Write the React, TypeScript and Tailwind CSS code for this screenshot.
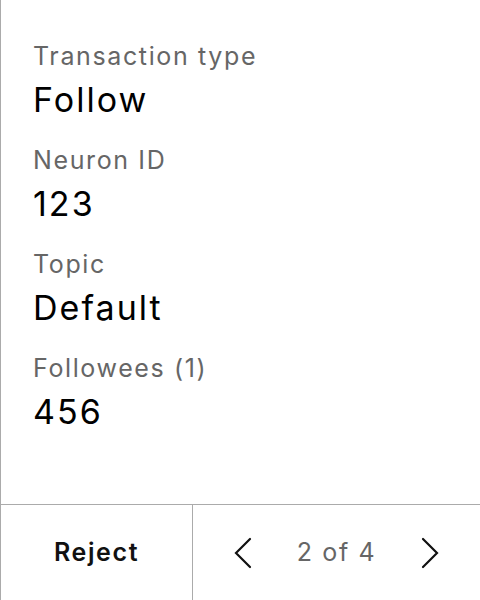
import React from 'react';

const fields = [
  { label: 'Transaction type', value: 'Follow' },
  { label: 'Neuron ID', value: '123' },
  { label: 'Topic', value: 'Default' },
  { label: 'Followees (1)', value: '456' },
];

function Chevron({ dir }: { dir: 'left' | 'right' }) {
  return (
    <svg width="24" height="32" viewBox="0 0 24 32" fill="none" stroke="#111" strokeWidth="2.2" strokeLinecap="round" strokeLinejoin="miter">
      {dir === 'left' ? <path d="M19 2 L5 16 L19 30" /> : <path d="M5 2 L19 16 L5 30" />}
    </svg>
  );
}

export default function App() {
  return (
    <div
      className="flex h-screen w-full flex-col border-l border-[#ababab] bg-white text-black"
      style={{ fontFamily: 'Inter, "Noto Sans", sans-serif' }}
    >
      {/* details */}
      <div className="flex flex-1 flex-col gap-6 px-8 pt-10">
        {fields.map((f) => (
          <div key={f.label} className="flex flex-col gap-2">
            <div className="text-[25px] leading-[32px] tracking-[0.065em] text-[#666666]">{f.label}</div>
            <div className="text-[34px] leading-[40px] tracking-[0.06em] text-black">{f.value}</div>
          </div>
        ))}
      </div>

      {/* footer actions */}
      <div className="flex h-[96px] border-t border-[#ababab]">
        <button
          type="button"
          className="flex w-[192px] items-center justify-center border-r border-[#ababab] text-[25px] font-semibold tracking-[0.065em] text-[#111]"
        >
          Reject
        </button>
        <div className="flex flex-1 items-center justify-between px-[38px]">
          <button type="button" className="flex items-center">
            <Chevron dir="left" />
          </button>
          <span className="text-[25px] tracking-[0.065em] text-[#666666]">2 of 4</span>
          <button type="button" className="flex items-center">
            <Chevron dir="right" />
          </button>
        </div>
      </div>
    </div>
  );
}
